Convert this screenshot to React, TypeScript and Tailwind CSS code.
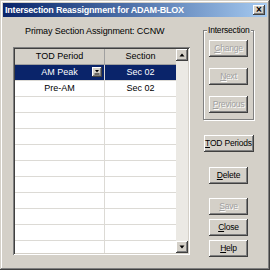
import React from "react";

const raised =
  "shadow-[inset_-1px_-1px_#404040,inset_1px_1px_#ffffff,inset_-2px_-2px_#808080,inset_2px_2px_#d4d0c8]";

function Btn({ label, u, disabled, wide }: { label: string; u: number; disabled?: boolean; wide?: boolean }) {
  const before = label.slice(0, u);
  const ch = label.charAt(u);
  const after = label.slice(u + 1);
  return (
    <div
      className={`${raised} bg-[#d4d0c8] h-[17px] flex items-center justify-center whitespace-nowrap text-[8.5px] tracking-[-0.2px] ${
        wide ? "w-[50px]" : "w-[39px]"
      } ${disabled ? "text-[#a0a0a0] [text-shadow:1px_1px_0_#ffffff]" : "text-black"}`}
    >
      <span>
        {before}
        <span className="underline">{ch}</span>
        {after}
      </span>
    </div>
  );
}

export default function App() {
  const rows = Array.from({ length: 11 });
  return (
    <div className="w-[270px] h-[270px] bg-[#d4d0c8] p-[3px] font-['Liberation_Sans',Arial,sans-serif] text-[9px] leading-none shadow-[inset_-1px_-1px_#404040,inset_1px_1px_#d4d0c8,inset_-2px_-2px_#808080,inset_2px_2px_#ffffff] flex flex-col overflow-hidden">
      {/* title bar */}
      <div className="h-[14px] bg-gradient-to-r from-[#0a246a] to-[#a6caf0] flex items-center justify-between pl-[2px] pr-[2px]">
        <span className="text-white font-bold text-[9px] tracking-[-0.2px]">Intersection Reassignment for ADAM-BLOX</span>
        <div className={`${raised} w-[12px] h-[10px] bg-[#d4d0c8] flex items-center justify-center text-[10px] font-bold text-black`}>×</div>
      </div>

      <div className="flex flex-1 pt-[9px]">
        {/* left */}
        <div className="ml-[10px] flex flex-col">
          <div className="pl-[12px] h-[10px] flex items-center tracking-[-0.1px]">Primay Section Assignment: CCNW</div>
          <div className="mt-[11px] w-[177px] h-[208px] bg-white p-[2px] flex shadow-[inset_1px_1px_#808080,inset_-1px_-1px_#ffffff,inset_2px_2px_#404040,inset_-2px_-2px_#d4d0c8]">
            <div className="flex-1 flex flex-col overflow-hidden">
              <div className="flex h-[16px] shrink-0 bg-[#d4d0c8] border-b border-[#a0a0a0]">
                <div className="w-[90px] flex items-center justify-center border-r border-[#a0a0a0]">TOD Period</div>
                <div className="flex-1 flex items-center justify-center">Section</div>
              </div>
              <div className="flex h-[16px] shrink-0 border-b border-[#dcdad5] text-white">
                <div className="w-[90px] bg-[#0a246a] flex items-center justify-center relative border-r border-[#dcdad5]">
                  AM Peak
                  <div className={`${raised} absolute right-[2px] top-[2px] w-[10px] h-[10px] bg-[#d4d0c8] flex flex-col items-center justify-center`}>
                    <svg width="6" height="6" viewBox="0 0 6 6">
                      <path d="M1 1h4L3 3.5z" fill="#000" />
                      <rect x="0.5" y="4.5" width="5" height="1" fill="#000" />
                    </svg>
                  </div>
                </div>
                <div className="flex-1 bg-[#0a246a] flex items-center justify-center">Sec 02</div>
              </div>
              <div className="flex h-[16px] shrink-0 border-b border-[#dcdad5]">
                <div className="w-[90px] flex items-center justify-center border-r border-[#dcdad5]">Pre-AM</div>
                <div className="flex-1 flex items-center justify-center">Sec 02</div>
              </div>
              {rows.map((_, i) => (
                <div key={i} className="flex h-[16px] shrink-0 border-b border-[#dcdad5]">
                  <div className="w-[90px] border-r border-[#dcdad5]" />
                  <div className="flex-1" />
                </div>
              ))}
            </div>
            {/* scrollbar */}
            <div className="w-[12px] flex flex-col bg-[#ece9e4]">
              <div className={`${raised} h-[12px] bg-[#d4d0c8] flex items-center justify-center`}>
                <svg width="6" height="4" viewBox="0 0 6 4"><path d="M0.5 3.5h5L3 0.5z" fill="#000" /></svg>
              </div>
              <div className="flex-1 bg-[#ebe9e4]" />
              <div className={`${raised} h-[12px] bg-[#d4d0c8] flex items-center justify-center`}>
                <svg width="6" height="4" viewBox="0 0 6 4"><path d="M0.5 0.5h5L3 3.5z" fill="#000" /></svg>
              </div>
            </div>
          </div>
        </div>

        {/* right */}
        <div className="ml-[13px] flex flex-col">
          <div className="relative mt-[4px] w-[51px] h-[90px] border border-[#808080] shadow-[1px_1px_#ffffff,inset_1px_1px_#ffffff] flex flex-col items-center pt-[9px] gap-[11px]">
            <span className="absolute -top-[5px] left-[3px] bg-[#d4d0c8] px-[1px] text-[8.5px] tracking-[-0.2px]">Intersection</span>
            <Btn label="Change" u={0} disabled />
            <Btn label="Next" u={0} disabled />
            <Btn label="Previous" u={0} disabled />
          </div>
          <div className="mt-[15px] flex flex-col items-center gap-[15px]">
            <Btn label="TOD Periods" u={0} wide />
            <Btn label="Delete" u={0} />
          </div>
          <div className="mt-[14px] flex flex-col items-center gap-[4px]">
            <Btn label="Save" u={0} disabled />
            <Btn label="Close" u={0} />
            <Btn label="Help" u={0} />
          </div>
        </div>
      </div>
    </div>
  );
}
